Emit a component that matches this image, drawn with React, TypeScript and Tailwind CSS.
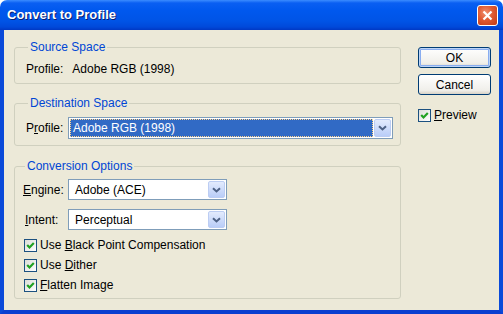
import React from "react";

function CheckBox({ children }: { children: React.ReactNode }) {
  return (
    <label className="flex h-[20px] items-center">
      <span className="flex h-[13px] w-[13px] items-center justify-center border border-[#1c5180] bg-[linear-gradient(135deg,#dcdcd7,#ffffff)]">
        <svg width="11" height="11" viewBox="0 0 11 11">
          <polyline points="2.2,5 4.5,7.4 8.8,3" fill="none" stroke="#21a121" strokeWidth="2.2" />
        </svg>
      </span>
      <span className="ml-[3px]">{children}</span>
    </label>
  );
}

function ArrowButton() {
  return (
    <span className="flex h-full w-[17px] items-center justify-center rounded-[2px] border border-[#bccdf3] bg-[linear-gradient(to_bottom,#e3ebfd,#b9cdf8)]">
      <svg width="9" height="6" viewBox="0 0 9 6">
        <path d="M1 1.2l3.5 3.3L8 1.2" fill="none" stroke="#4d6185" strokeWidth="2" />
      </svg>
    </span>
  );
}

function Combo({ value, width, height, selected }: { value: string; width: string; height: string; selected?: boolean }) {
  return (
    <div className={`flex items-stretch border border-[#7f9db9] bg-white p-[1px] ${width} ${height}`}>
      {selected ? (
        <div className="mr-[1px] flex flex-1 items-center border border-dotted border-[#ffd48a] bg-[#316ac5] pl-[2px] text-white">
          {value}
        </div>
      ) : (
        <div className="flex flex-1 items-center pl-[5px]">{value}</div>
      )}
      <ArrowButton />
    </div>
  );
}

function Group({ title, className, children }: { title: string; className: string; children: React.ReactNode }) {
  return (
    <fieldset className={`w-[387px] rounded-[3px] border border-[#d0d0bf] ${className}`}>
      <legend className="ml-[2px] px-[2px] leading-[14px] text-[#0046d5]">{title}</legend>
      {children}
    </fieldset>
  );
}

export default function App() {
  return (
    <div className="flex h-[314px] w-[503px] flex-col font-['Liberation_Sans',Arial,sans-serif] text-[12px] leading-[14px] text-black">
      {/* title bar */}
      <div className="flex h-[30px] items-center justify-between rounded-t-[7px] bg-[linear-gradient(to_bottom,#3b8cff_0%,#0a5ff2_10%,#0058ee_35%,#0054e6_70%,#0049da_90%,#0038c4_100%)] pl-[7px] pr-[5px]">
        <span className="text-[13px] font-bold text-white [text-shadow:1px_1px_#0a1e6e]">Convert to Profile</span>
        <span className="flex h-[21px] w-[21px] items-center justify-center rounded-[3px] border border-white bg-[radial-gradient(circle_at_40%_35%,#f09070,#e05a32_45%,#c23a14)]">
          <svg width="11" height="11" viewBox="0 0 11 11">
            <path d="M1.5 1.5l8 8M9.5 1.5l-8 8" stroke="white" strokeWidth="2.2" />
          </svg>
        </span>
      </div>

      {/* client */}
      <div className="flex flex-1 border-x-4 border-b-4 border-x-[#0a4ad9] border-b-[#0a3fd0] bg-[#ece9d8] pl-[10px] pt-[10px]">
        <div className="flex flex-col">
          <Group title="Source Space" className="pb-[7px] pl-[11px] pt-[8px]">
            <div className="flex">
              <span>Profile:</span>
              <span className="ml-[9px]">Adobe RGB (1998)</span>
            </div>
          </Group>

          <Group title="Destination Space" className="mt-[12px] pb-[6px] pl-[11px] pt-[7px]">
            <div className="flex items-center">
              <span className="w-[42px]">
                P<u>r</u>ofile:
              </span>
              <Combo value="Adobe RGB (1998)" width="w-[325px]" height="h-[22px]" selected />
            </div>
          </Group>

          <Group title="Conversion Options" className="mt-[13px] pb-[3px] pl-[8px] pt-[6px]">
            <div className="flex items-center">
              <span className="w-[45px]">
                <u>E</u>ngine:
              </span>
              <Combo value="Adobe (ACE)" width="w-[159px]" height="h-[21px]" />
            </div>
            <div className="mt-[9px] flex items-center">
              <span className="ml-[2px] w-[43px]">
                <u>I</u>ntent:
              </span>
              <Combo value="Perceptual" width="w-[159px]" height="h-[21px]" />
            </div>
            <div className="ml-[1px] mt-[5px] flex flex-col">
              <CheckBox>
                Use <u>B</u>lack Point Compensation
              </CheckBox>
              <CheckBox>
                Use <u>D</u>ither
              </CheckBox>
              <CheckBox>
                <u>F</u>latten Image
              </CheckBox>
            </div>
          </Group>
        </div>

        <div className="ml-[17px] mt-[7px] flex flex-col">
          <button className="h-[21px] w-[73px] rounded-[3px] border border-[#003c74] bg-[linear-gradient(to_bottom,#ffffff,#f0efea_80%,#d8d2c6)] shadow-[inset_0_0_0_1px_#bcd4f6,inset_0_0_0_2px_#89adf0]">
            OK
          </button>
          <button className="mt-[6px] h-[21px] w-[73px] rounded-[3px] border border-[#003c74] bg-[linear-gradient(to_bottom,#ffffff,#f0efea_80%,#d8d2c6)]">
            Cancel
          </button>
          <div className="mt-[10px]">
            <CheckBox>
              <u>P</u>review
            </CheckBox>
          </div>
        </div>
      </div>
    </div>
  );
}
